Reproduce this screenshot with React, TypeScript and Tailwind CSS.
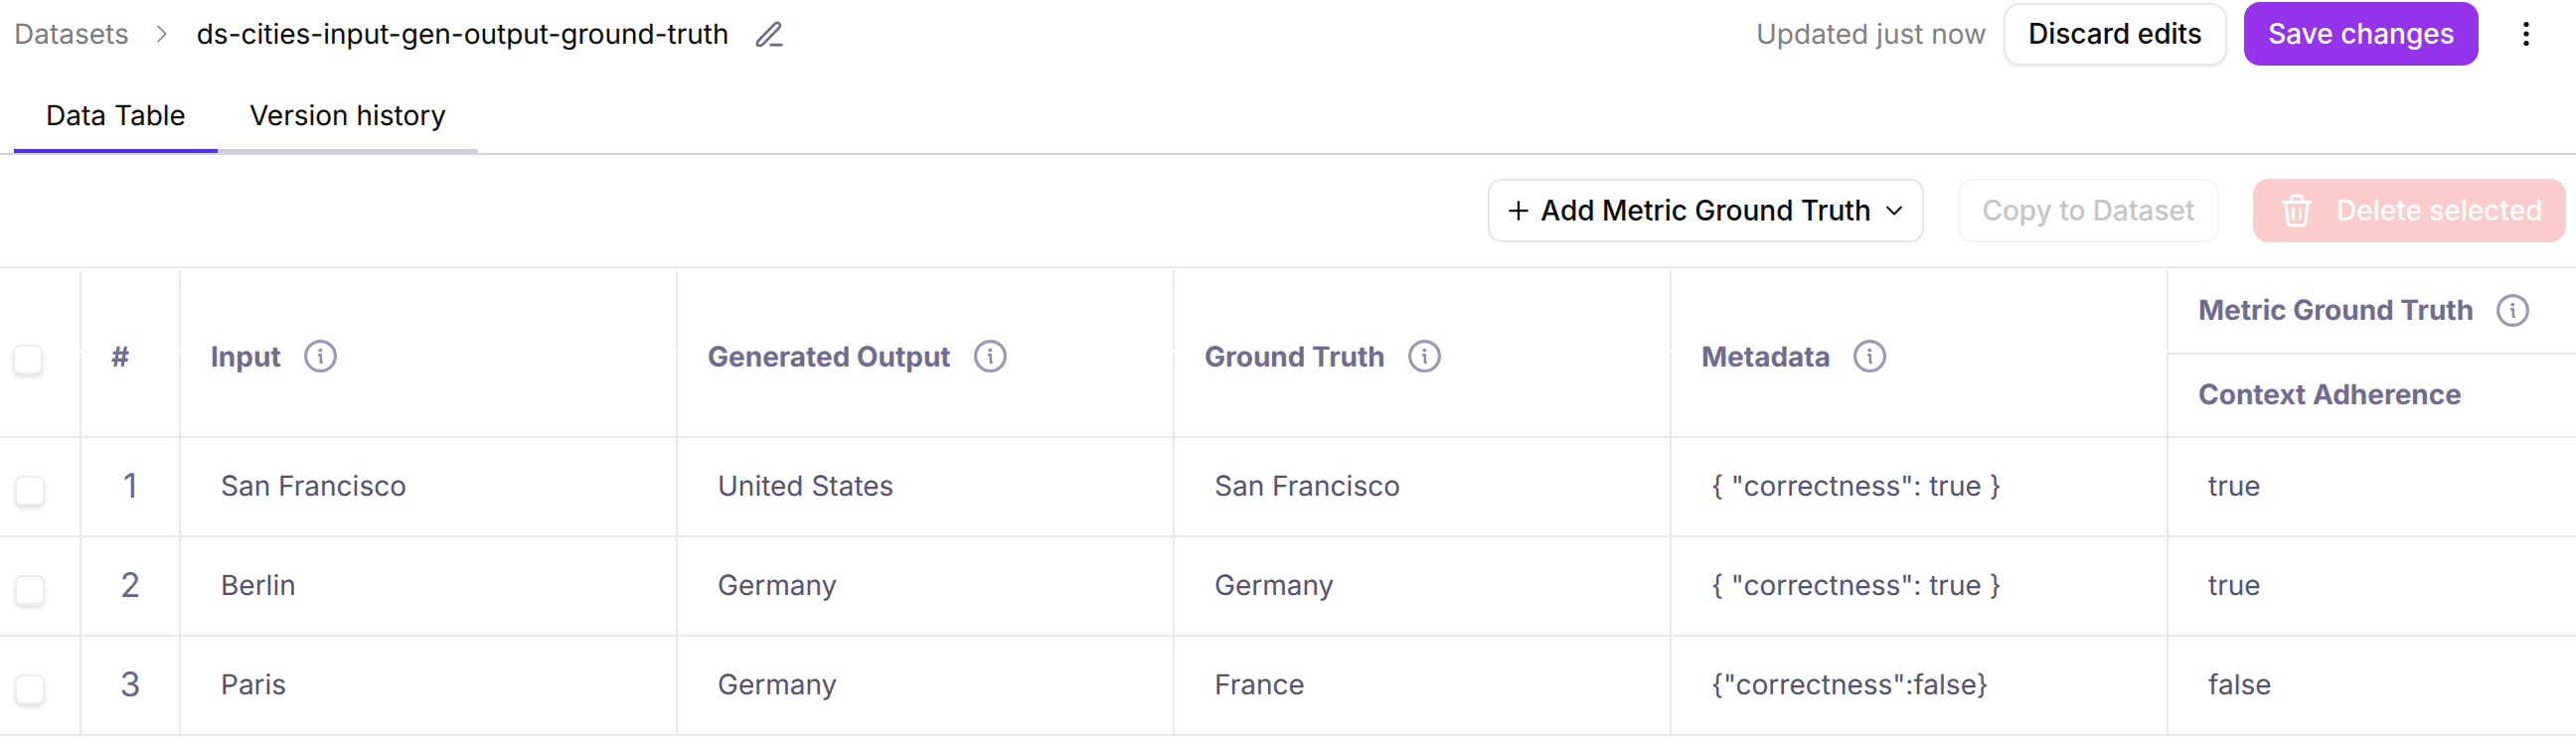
import { ChevronDown, ChevronRight, Plus } from "lucide-react";

const rows = [
  { id: 1, input: "San Francisco", output: "United States", truth: "San Francisco", meta: '{ "correctness": true }', metric: "true" },
  { id: 2, input: "Berlin", output: "Germany", truth: "Germany", meta: '{ "correctness": true }', metric: "true" },
  { id: 3, input: "Paris", output: "Germany", truth: "France", meta: '{"correctness":false}', metric: "false" },
];

function InfoIcon() {
  return (
    <svg width="33" height="33" viewBox="0 0 33 33" fill="none" className="shrink-0 text-[#9c9ab4]">
      <circle cx="16.5" cy="16.5" r="14.9" stroke="currentColor" strokeWidth="3.2" />
      <circle cx="16.3" cy="10.6" r="1.9" fill="#8f8dab" />
      <path d="M14 15.2h2.8v7.6h2" stroke="#8f8dab" strokeWidth="2.4" strokeLinejoin="round" />
    </svg>
  );
}

function PenIcon() {
  return (
    <svg width="28" height="28" viewBox="0 0 28 28" fill="none" className="text-[#6f6c8f]">
      <path
        d="M2.2 25.6c-.6-1.8-.3-3.3.9-4.6L19.2 4.4c1.6-1.6 3.6-1.9 4.9-.7 1.3 1.3 1 3.2-.6 4.8L7.4 24.8c-1.4 1.2-3.2 1.5-5.2.8Z"
        stroke="currentColor"
        strokeWidth="2.6"
        strokeLinejoin="round"
      />
      <path d="M14.5 25.2h13" stroke="currentColor" strokeWidth="2.8" />
    </svg>
  );
}

function TrashIcon() {
  return (
    <svg width="30" height="34" viewBox="0 0 30 34" fill="none" stroke="#ffffff" strokeWidth="3" strokeLinejoin="round" strokeLinecap="round">
      <path d="M1.5 8.5h27" />
      <path d="M9.5 8V5a3 3 0 0 1 3-3h5a3 3 0 0 1 3 3v3" />
      <path d="M4 8.5l2 20a3.500 3.500 0 0 0 3.500 3.200h11a3.500 3.500 0 0 0 3.500-3.200l2-20" />
      <path d="M11.500 15v10M18.500 15v10" />
    </svg>
  );
}

function DotsIcon() {
  return (
    <svg width="8" height="28" viewBox="0 0 8 28" fill="#111111">
      <circle cx="4" cy="4.500" r="2.600" />
      <circle cx="4" cy="14" r="2.600" />
      <circle cx="4" cy="23.500" r="2.600" />
    </svg>
  );
}

function Checkbox({ className }: { className: string }) {
  return <div className={`h-[30px] w-[30px] rounded-[7px] border-2 border-[#ececf0] bg-white shadow-[0_3px_4px_rgba(60,60,80,0.16)] ${className}`} />;
}

// header cell: its right rule starts a little under the table's top rule and has a small break half way
function HeadCell({ children, className = "" }: { children?: React.ReactNode; className?: string }) {
  return (
    <div className={`relative mt-[3px] flex items-center border-r-2 border-[#e8e8ee] pt-[5px] ${className}`}>
      <span className="absolute right-[-2px] top-[80px] h-[2px] w-[2px] bg-white" />
      {children}
    </div>
  );
}

function Label({ text }: { text: string }) {
  return (
    <div className="flex items-center gap-[23px] pl-[30px]">
      <span>{text}</span>
      <InfoIcon />
    </div>
  );
}

function TextCell({ text, last = false }: { text: string; last?: boolean }) {
  return <div className={`flex items-center pb-[2px] pl-[40px] ${last ? "" : "border-r-2 border-[#e8e8ee]"}`}>{text}</div>;
}

export default function App() {
  return (
    <div className="h-[746px] w-[2592px] overflow-hidden bg-white font-[Inter,sans-serif] text-[28px] leading-[34px] [text-rendering:geometricPrecision]">
      <div className="flex h-[68px] items-center justify-between pl-[14px] pr-[46px]">
        <div className="flex items-center">
          <span className="text-[#7b7b7b]">Datasets</span>
          <ChevronRight className="ml-[18px] mr-[20px] h-[30px] w-[30px] text-[#7b7b7b]" strokeWidth={1.3} />
          <span className="text-[#0a0a0a]">ds-cities-input-gen-output-ground-truth</span>
          <span className="ml-[26px]">
            <PenIcon />
          </span>
        </div>
        <div className="flex items-center">
          <span className="mr-[17px] text-[#808080]">Updated just now</span>
          <button className="flex h-[63px] w-[225px] items-center justify-center rounded-[16px] border-2 border-[#e6e6e6] bg-white font-medium text-[#0a0a0a] shadow-[0_2px_3px_rgba(0,0,0,0.08)]">
            Discard edits
          </button>
          <button className="ml-[17px] flex h-[64px] w-[236px] items-center justify-center rounded-[16px] bg-[#9333ea] font-medium text-white">
            Save changes
          </button>
          <span className="ml-[44px] flex">
            <DotsIcon />
          </span>
        </div>
      </div>

      <div className="flex h-[88px] items-end border-b-2 border-[#d4d4d8] pl-[14px]">
        <div className="flex h-[64px] w-[205px] items-start justify-center border-b-4 border-[#4f2ff0] pt-[9px] text-[#0a0a0a]">Data Table</div>
        <div className="flex h-[64px] w-[262px] items-start justify-center border-b-4 border-[#d1d0da] pt-[9px] text-[#0a0a0a]">Version history</div>
      </div>

      <div className="flex h-[114px] items-center justify-end border-b-2 border-[#e8e8ee] pr-[10px]">
        <button className="flex h-[64px] w-[439px] items-center justify-center rounded-[14px] border-2 border-[#e6e6e6] bg-white font-medium text-[#0a0a0a]">
          <Plus className="mr-[7px] h-[30px] w-[30px]" strokeWidth={1.8} />
          Add Metric Ground Truth
          <ChevronDown className="ml-[9px] h-[28px] w-[28px]" strokeWidth={1.7} />
        </button>
        <button className="ml-[34px] flex h-[64px] w-[263px] items-center justify-center rounded-[14px] border-2 border-[#f4f4f6] bg-white font-medium text-[#c6c6c6]">
          Copy to Dataset
        </button>
        <button className="ml-[34px] flex h-[64px] w-[315px] items-center gap-[25px] rounded-[16px] bg-[#facccc] pl-[29px] font-medium text-white">
          <TrashIcon />
          Delete selected
        </button>
      </div>

      <div className="grid h-[171px] grid-cols-[82px_100px_500px_500px_500px_500px_1fr] border-b-2 border-[#e8e8ee] font-bold text-[#6f6c8f]">
        <HeadCell>
          <Checkbox className="ml-[13px] mt-[7px]" />
        </HeadCell>
        <HeadCell>
          <span className="pl-[30px]">#</span>
        </HeadCell>
        <HeadCell>
          <Label text="Input" />
        </HeadCell>
        <HeadCell>
          <Label text="Generated Output" />
        </HeadCell>
        <HeadCell>
          <Label text="Ground Truth" />
        </HeadCell>
        <HeadCell>
          <Label text="Metadata" />
        </HeadCell>
        <div className="mt-[3px] flex flex-col">
          <div className="flex h-[82px] items-center pb-[4px]">
            <Label text="Metric Ground Truth" />
          </div>
          <div className="flex flex-1 items-center border-t-2 border-[#e8e8ee] pb-[3px] pl-[30px]">Context Adherence</div>
        </div>
      </div>

      {rows.map((row) => (
        <div key={row.id} className="grid h-[100px] grid-cols-[82px_100px_500px_500px_500px_500px_1fr] border-b-2 border-[#e8e8ee] text-[#55536f]">
          <div className="flex items-center border-r-2 border-[#e8e8ee] pt-[8px]">
            <Checkbox className="ml-[15px]" />
          </div>
          <div className="flex items-center justify-center border-r-2 border-[#e8e8ee] text-[34px] text-[#68658a]">{row.id}</div>
          <TextCell text={row.input} />
          <TextCell text={row.output} />
          <TextCell text={row.truth} />
          <TextCell text={row.meta} />
          <TextCell text={row.metric} last />
        </div>
      ))}
    </div>
  );
}
